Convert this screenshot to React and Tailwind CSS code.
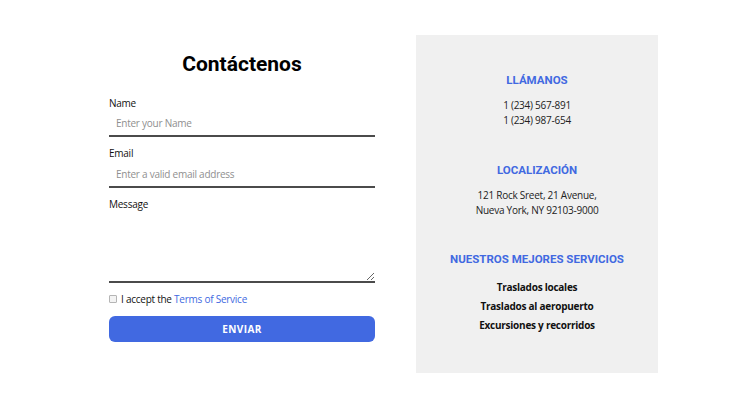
import React from "react";

export default function App() {
  return (
    <div className="min-h-[408px] w-[750px] bg-white" style={{ fontFamily: "'Open Sans', sans-serif" }}>
      <div className="flex items-start gap-[41px] pl-[109px] pt-[35px]">
        <ContactForm />
        <InfoPanel />
      </div>
    </div>
  );
}

function ContactForm() {
  return (
    <form className="w-[266px] pt-[16px] flex flex-col" onSubmit={(e) => e.preventDefault()}>
      <h1 className="text-center text-[21px] leading-[26px] font-bold text-black" style={{ fontFamily: "Roboto, sans-serif" }}>
        Contáctenos
      </h1>

      <label className="mt-[19px] text-[10px] tracking-[-0.25px] leading-[14px] text-[#111]">Name</label>
      <input
        type="text"
        placeholder="Enter your Name"
        className="h-[27px] pt-[1px] px-[7px] text-[10px] tracking-[-0.25px] text-[#333] placeholder:text-[#8f8f8f] border-b-2 border-[#4b4b4b] outline-none"
      />

      <label className="mt-[9px] text-[10px] tracking-[-0.25px] leading-[14px] text-[#111]">Email</label>
      <input
        type="email"
        placeholder="Enter a valid email address"
        className="h-[28px] pt-[1px] px-[7px] text-[10px] tracking-[-0.25px] text-[#333] placeholder:text-[#8f8f8f] border-b-2 border-[#4b4b4b] outline-none"
      />

      <label className="mt-[9px] text-[10px] tracking-[-0.25px] leading-[14px] text-[#111]">Message</label>
      <textarea className="h-[72px] px-[7px] text-[10px] border-b-2 border-[#4b4b4b] outline-none resize-y" />

      <div className="mt-[9px] flex items-center gap-[3px] text-[10px] tracking-[-0.25px] leading-[14px] text-[#111]">
        <span className="w-[8px] h-[8px] border border-[#b5b5b5] rounded-[1px] bg-[#f3f3f3] mr-[1px]" />
        <span>
          I accept the <span className="text-[#4169e1]">Terms of Service</span>
        </span>
      </div>

      <button
        type="submit"
        className="mt-[10px] h-[26px] rounded-[6px] bg-[#4169e1] text-white text-[10px] font-bold tracking-[0.4px]"
      >
        ENVIAR
      </button>
    </form>
  );
}

function InfoPanel() {
  return (
    <div className="w-[242px] h-[338px] bg-[#f0f0f0] pt-[37px] flex flex-col items-center text-center text-[10px] tracking-[-0.25px] text-[#222]">
      <Title>LLÁMANOS</Title>
      <div className="mt-[10px] leading-[15px]">
        <p>1 (234) 567-891</p>
        <p>1 (234) 987-654</p>
      </div>

      <Title className="mt-[34px]">LOCALIZACIÓN</Title>
      <div className="mt-[10px] leading-[15px]">
        <p>121 Rock Sreet, 21 Avenue,</p>
        <p>Nueva York, NY 92103-9000</p>
      </div>

      <Title className="mt-[33px]">NUESTROS MEJORES SERVICIOS</Title>
      <ul className="mt-[11px] leading-[19px] font-bold text-[#111]">
        <li>Traslados locales</li>
        <li>Traslados al aeropuerto</li>
        <li>Excursiones y recorridos</li>
      </ul>
    </div>
  );
}

function Title({ children, className = "" }) {
  return (
    <h3
      className={`text-[11.5px] tracking-normal leading-[16px] font-bold text-[#4169e1] ${className}`}
      style={{ fontFamily: "Roboto, sans-serif" }}
    >
      {children}
    </h3>
  );
}
